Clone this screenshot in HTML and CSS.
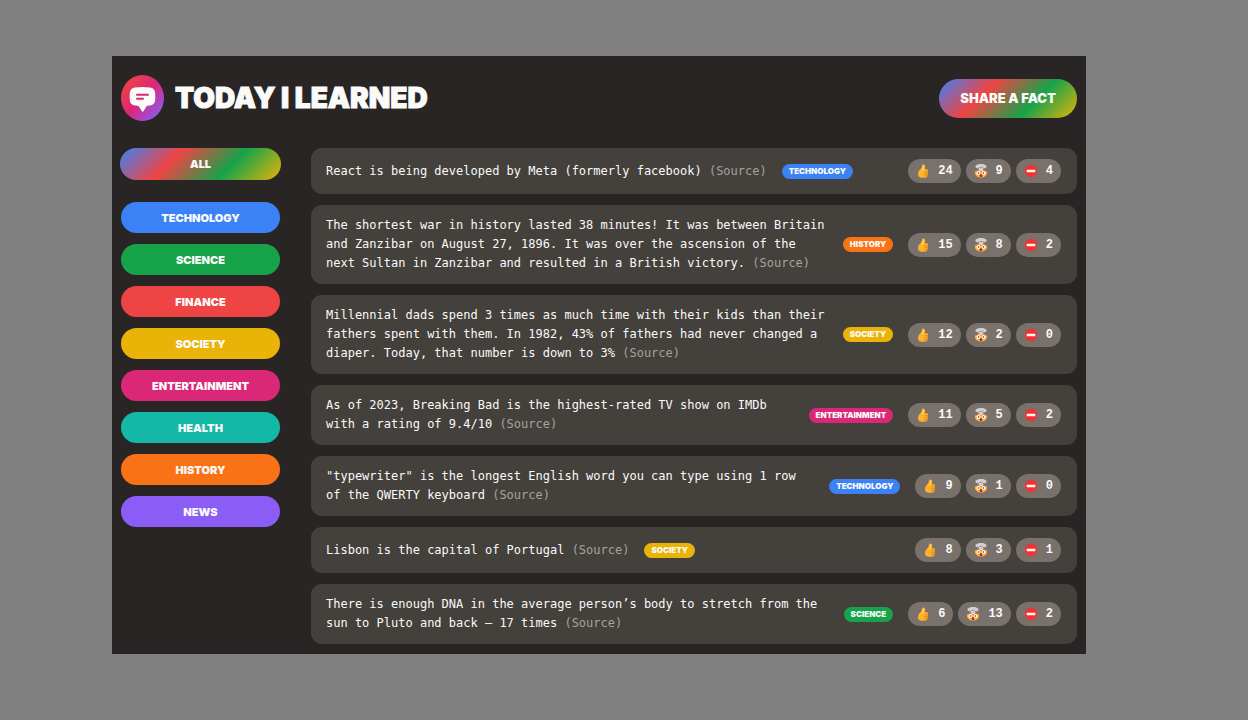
FILE: index.html
```html
<!DOCTYPE html>
<html lang="en">
<head>
<meta charset="utf-8">
<title>Today I Learned</title>
<link rel="stylesheet" href="styles.css">
</head>
<body>
<svg class="defs" aria-hidden="true">
  <symbol id="thumb" viewBox="0 0 28 28">
    <path fill="#ffb02e" d="M12 3c0-2 4-3 5.500-.5 1.300 2.200 1 5 .2 8H21c2.500 0 3.500 1.500 3.200 4L23 23c-.5 3-2 4.500-5 4.500h-7c-4.500 0-7-2.500-7-7.500 0-4 1.500-6.500 4-8.500 2.500-2.200 4-5 4-8.500z"/>
    <path fill="#ffd45c" d="M13.500 3.500c2-.8 2.800.8 2.400 3l-1.400 6-5 2c3-3 4-7 4-11z"/>
    <path fill="none" stroke="#d67d00" stroke-width="1.500" d="M24 15.500h-7M23.500 19.500h-7M22.500 23.500h-6"/>
  </symbol>
  <symbol id="mind" viewBox="0 0 28 28">
    <path fill="#ffb02e" d="M2 14h24c1.500 8-3.500 13-12 13S.5 22 2 14z"/>
    <path fill="#f26a25" d="M2 15l2-3 3 1 2-2 5 1 5-1 2 2 3-1 2 3-2 1-3-1-3 1-4-2-4 2-3-1-3 1z"/>
    <path fill="#d0d0d0" d="M5 8C2 7 2 2 6 2c3-3 13-3 16 0 4 0 4 5 1 6-2 1-4 1-5 0l1 5c-2 1.500-8 1.500-10 0l1-5c-1 1-3 1-5 0z"/>
    <path fill="#9d9d9d" d="M9 6h10l-2 2h-6z"/>
    <circle cx="8.800" cy="18" r="3.800" fill="#fff"/><circle cx="19.200" cy="18" r="3.800" fill="#fff"/>
    <circle cx="9.300" cy="18" r="1.500" fill="#402a32"/><circle cx="18.700" cy="18" r="1.500" fill="#402a32"/>
    <ellipse cx="14" cy="23.500" rx="2.700" ry="2.900" fill="#bb1d40"/>
  </symbol>
  <symbol id="stop" viewBox="0 0 28 28">
    <ellipse cx="14" cy="14" rx="12" ry="12.500" fill="#f92f2f"/>
    <rect x="5.500" y="11.500" width="17" height="5" rx="1" fill="#fff"/>
  </symbol>
</svg>
<div class="app">
  <header class="header">
    <div class="brand">
      <svg class="logo" viewBox="0 0 43 46" role="img" aria-label="Speech bubble logo">
        <defs>
          <linearGradient id="logo-fill" x1="0.1" y1="0.1" x2="0.9" y2="0.9">
            <stop offset="0" stop-color="#ef4444"/><stop offset=".5" stop-color="#db2777"/><stop offset="1" stop-color="#8b5cf6"/>
          </linearGradient>
        </defs>
        <ellipse cx="21.500" cy="23" rx="21.500" ry="23" fill="url(#logo-fill)"/>
        <path fill="#fafaf9" d="M14 12.500c5-.7 10-.7 15 0 3.300.4 5 2.400 5.200 5.500.2 2.500.2 4.500 0 7-.2 3.200-2 5-5.200 5.500l-3 .3-3.600 5.500q-.7 1-1.400 0L17.500 31 14 30.500c-3.200-.4-5-2.300-5.200-5.500-.2-2.500-.2-4.500 0-7 .2-3.100 2-5.100 5.200-5.500z"/>
        <path stroke="#db2777" stroke-width="2" stroke-linecap="round" d="M16 19.800h11M16 23.800h6"/>
      </svg>
      <h1 class="title">TODAY I LEARNED</h1>
    </div>
    <button class="share rainbow" type="button">SHARE A FACT</button>
  </header>
  <div class="layout">
    <nav class="filters" aria-label="Categories">
      <button class="filter filter-all rainbow" type="button">ALL</button>
      <button class="filter technology" type="button">TECHNOLOGY</button>
      <button class="filter science" type="button">SCIENCE</button>
      <button class="filter finance" type="button">FINANCE</button>
      <button class="filter society" type="button">SOCIETY</button>
      <button class="filter entertainment" type="button">ENTERTAINMENT</button>
      <button class="filter health" type="button">HEALTH</button>
      <button class="filter history" type="button">HISTORY</button>
      <button class="filter news" type="button">NEWS</button>
    </nav>
    <main class="facts">
      <article class="fact">
        <p class="text">React is being developed by Meta (formerly facebook) <a class="source" href="#">(Source)</a></p>
        <span class="tag technology">TECHNOLOGY</span>
        <div class="votes">
          <button class="vote" type="button" aria-label="Like 24"><svg class="emoji"><use href="#thumb"/></svg>24</button>
          <button class="vote" type="button" aria-label="Mind blowing 9"><svg class="emoji"><use href="#mind"/></svg>9</button>
          <button class="vote" type="button" aria-label="False 4"><svg class="emoji"><use href="#stop"/></svg>4</button>
        </div>
      </article>
      <article class="fact">
        <p class="text">The shortest war in history lasted 38 minutes! It was between Britain and Zanzibar on August 27, 1896. It was over the ascension of the next Sultan in Zanzibar and resulted in a British victory. <a class="source" href="#">(Source)</a></p>
        <span class="tag history">HISTORY</span>
        <div class="votes">
          <button class="vote" type="button" aria-label="Like 15"><svg class="emoji"><use href="#thumb"/></svg>15</button>
          <button class="vote" type="button" aria-label="Mind blowing 8"><svg class="emoji"><use href="#mind"/></svg>8</button>
          <button class="vote" type="button" aria-label="False 2"><svg class="emoji"><use href="#stop"/></svg>2</button>
        </div>
      </article>
      <article class="fact">
        <p class="text">Millennial dads spend 3 times as much time with their kids than their fathers spent with them. In 1982, 43% of fathers had never changed a diaper. Today, that number is down to 3% <a class="source" href="#">(Source)</a></p>
        <span class="tag society">SOCIETY</span>
        <div class="votes">
          <button class="vote" type="button" aria-label="Like 12"><svg class="emoji"><use href="#thumb"/></svg>12</button>
          <button class="vote" type="button" aria-label="Mind blowing 2"><svg class="emoji"><use href="#mind"/></svg>2</button>
          <button class="vote" type="button" aria-label="False 0"><svg class="emoji"><use href="#stop"/></svg>0</button>
        </div>
      </article>
      <article class="fact">
        <p class="text">As of 2023, Breaking Bad is the highest-rated TV show on IMDb with a rating of 9.4/10 <a class="source" href="#">(Source)</a></p>
        <span class="tag entertainment">ENTERTAINMENT</span>
        <div class="votes">
          <button class="vote" type="button" aria-label="Like 11"><svg class="emoji"><use href="#thumb"/></svg>11</button>
          <button class="vote" type="button" aria-label="Mind blowing 5"><svg class="emoji"><use href="#mind"/></svg>5</button>
          <button class="vote" type="button" aria-label="False 2"><svg class="emoji"><use href="#stop"/></svg>2</button>
        </div>
      </article>
      <article class="fact">
        <p class="text">"typewriter" is the longest English word you can type using 1 row of the QWERTY keyboard <a class="source" href="#">(Source)</a></p>
        <span class="tag technology">TECHNOLOGY</span>
        <div class="votes">
          <button class="vote" type="button" aria-label="Like 9"><svg class="emoji"><use href="#thumb"/></svg>9</button>
          <button class="vote" type="button" aria-label="Mind blowing 1"><svg class="emoji"><use href="#mind"/></svg>1</button>
          <button class="vote" type="button" aria-label="False 0"><svg class="emoji"><use href="#stop"/></svg>0</button>
        </div>
      </article>
      <article class="fact">
        <p class="text">Lisbon is the capital of Portugal <a class="source" href="#">(Source)</a></p>
        <span class="tag society">SOCIETY</span>
        <div class="votes">
          <button class="vote" type="button" aria-label="Like 8"><svg class="emoji"><use href="#thumb"/></svg>8</button>
          <button class="vote" type="button" aria-label="Mind blowing 3"><svg class="emoji"><use href="#mind"/></svg>3</button>
          <button class="vote" type="button" aria-label="False 1"><svg class="emoji"><use href="#stop"/></svg>1</button>
        </div>
      </article>
      <article class="fact">
        <p class="text">There is enough DNA in the average person’s body to stretch from the sun to Pluto and back – 17 times <a class="source" href="#">(Source)</a></p>
        <span class="tag science">SCIENCE</span>
        <div class="votes">
          <button class="vote" type="button" aria-label="Like 6"><svg class="emoji"><use href="#thumb"/></svg>6</button>
          <button class="vote" type="button" aria-label="Mind blowing 13"><svg class="emoji"><use href="#mind"/></svg>13</button>
          <button class="vote" type="button" aria-label="False 2"><svg class="emoji"><use href="#stop"/></svg>2</button>
        </div>
      </article>
    </main>
  </div>
</div>
</body>
</html>
```
FILE: styles.css
```css
* { box-sizing: border-box; margin: 0; padding: 0; }

body {
  background: #808080;
  padding: 56px 162px 66px 112px;
  font-family: "DejaVu Sans Mono", monospace;
  font-size: 12px;
  line-height: 19px;
  color: #fafaf9;
}

button { border: 0; color: inherit; cursor: pointer; }

.defs { display: none; }

.app { background: #292524; padding: 19px 9px 10px; }

.header {
  display: flex;
  align-items: center;
  justify-content: space-between;
  margin-bottom: 27px;
}
.brand { display: flex; align-items: center; gap: 11px; }
.logo { display: block; width: 43px; height: 46px; }

.title, .share, .filter, .tag {
  font-family: Inter, "Open Sans", sans-serif;
  font-weight: 900;
}
.title {
  font-size: 28px;
  line-height: 46px;
  -webkit-text-stroke: 1px #fafaf9;
}

.rainbow { background: linear-gradient(135deg, #3b82f6, #ef4444, #16a34a, #eab308); }

.share {
  height: 39px;
  padding: 0 21px;
  border-radius: 20px;
  font-size: 13px;
}

.layout {
  display: grid;
  grid-template-columns: 159px 1fr;
  gap: 31px;
}

.filters { display: flex; flex-direction: column; gap: 11px; }
.filter { height: 31px; border-radius: 16px; font-size: 11px; }
.filter-all { height: 32px; margin: 0 -1px 11px; }

.facts { display: flex; flex-direction: column; gap: 11px; }
.fact {
  display: flex;
  align-items: center;
  gap: 15px;
  padding: 11px 16px 11px 15px;
  border-radius: 11px;
  background: #44403c;
}
.source { color: #a8a29e; text-decoration: none; }

.tag {
  flex: none;
  padding: 0 7px;
  border-radius: 8px;
  font-size: 8px;
  line-height: 15px;
}

.votes { display: flex; flex: none; gap: 5px; margin-left: auto; }
.vote {
  display: flex;
  align-items: center;
  gap: 8px;
  height: 24px;
  padding: 0 8px;
  border-radius: 12px;
  background: #78716c;
  font: bold 12px "Liberation Mono", monospace;
}
.emoji { width: 14px; height: 14px; }

.technology { background: #3b82f6; }
.science { background: #16a34a; }
.finance { background: #ef4444; }
.society { background: #eab308; }
.entertainment { background: #db2777; }
.health { background: #14b8a6; }
.history { background: #f97316; }
.news { background: #8b5cf6; }
```
